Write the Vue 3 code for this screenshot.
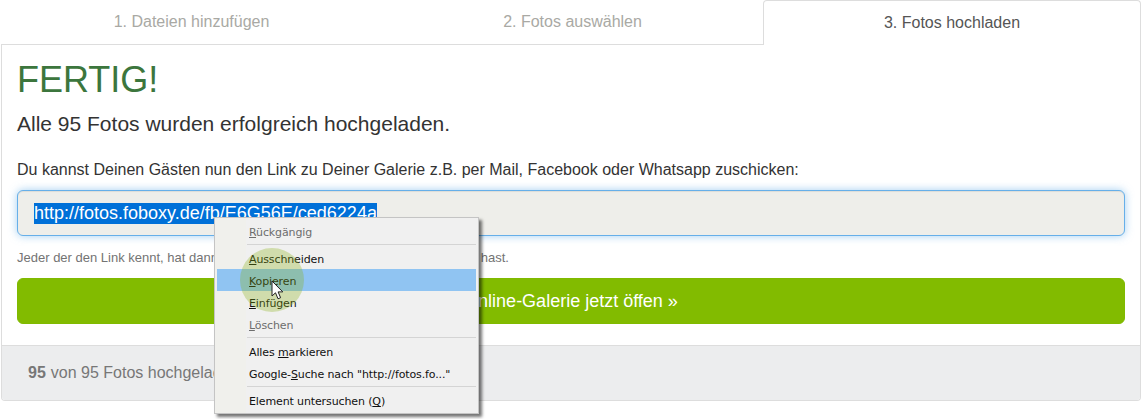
<template>
  <div class="page">
    <div class="tabs">
      <div v-for="tab in tabs" :key="tab.label" class="tab" :class="{ active: tab.active }">{{ tab.label }}</div>
    </div>
    <div class="panel">
      <div class="body">
        <h1>FERTIG!</h1>
        <h2>Alle 95 Fotos wurden erfolgreich hochgeladen.</h2>
        <p class="intro">Du kannst Deinen Gästen nun den Link zu Deiner Galerie z.B. per Mail, Facebook oder Whatsapp zuschicken:</p>
        <div class="link-box"><span class="selected">http://fotos.foboxy.de/fb/E6G56E/ced6224a</span></div>
        <p class="hint">Jeder der den Link kennt, hat dann Zugriff auf Deine Galerie, bis du sie gelöscht hast.</p>
        <button class="open-btn">Online-Galerie jetzt öffen »</button>
      </div>
      <div class="footer"><b>95</b> von 95 Fotos hochgeladen</div>
    </div>

    <div class="menu">
      <template v-for="(item, i) in menu" :key="i">
        <div v-if="item.sep" class="sep"></div>
        <div v-else class="item" :class="{ off: item.off, hover: item.hover }">
          {{ item.a }}<u>{{ item.u }}</u>{{ item.b }}
        </div>
      </template>
    </div>

    <div class="click-ring"></div>
    <svg class="cursor" width="14" height="22" viewBox="0 0 14 22">
      <path d="M1 1 L1 16 L4.5 12.8 L7 18.8 L9.6 17.7 L7.1 11.9 L11.8 11.9 Z" fill="#fff" stroke="#222" stroke-width="1" />
    </svg>
  </div>
</template>

<script setup>
const tabs = [
  { label: '1. Dateien hinzufügen' },
  { label: '2. Fotos auswählen' },
  { label: '3. Fotos hochladen', active: true }
]

const menu = [
  { a: '', u: 'R', b: 'ückgängig', off: true },
  { sep: true },
  { a: '', u: 'A', b: 'usschneiden' },
  { a: '', u: 'K', b: 'opieren', hover: true },
  { a: '', u: 'E', b: 'infügen' },
  { a: '', u: 'L', b: 'öschen', off: true },
  { sep: true },
  { a: 'Alles ', u: 'm', b: 'arkieren' },
  { a: 'Google-', u: 'S', b: 'uche nach "http://fotos.fo..."' },
  { sep: true },
  { a: 'Element untersuchen (', u: 'Q', b: ')' }
]
</script>

<style>
html, body {
  margin: 0;
  background: #fff;
}
</style>

<style scoped>
.page {
  position: relative;
  width: 1141px;
  height: 419px;
  overflow: hidden;
  font-family: "Liberation Sans", Arial, sans-serif;
  color: #333;
}
.tabs {
  display: grid;
  grid-template-columns: 381px 381px 378px;
  height: 45px;
  padding-left: 1px;
  box-sizing: border-box;
}
.tab {
  display: flex;
  align-items: center;
  justify-content: center;
  font-size: 16px;
  color: #a9a9a4;
  border-bottom: 1px solid #ddd;
  box-sizing: border-box;
}
.tab.active {
  color: #555;
  background: #fff;
  border: 1px solid #ddd;
  border-bottom: 0;
  border-radius: 4px 4px 0 0;
}
.panel {
  margin-left: 1px;
  width: 1140px;
  box-sizing: border-box;
  border: 1px solid #ddd;
  border-top: 0;
  border-radius: 0 0 4px 4px;
}
.body {
  padding: 15px 15px 21px;
}
h1 {
  margin: 0;
  font-size: 36px;
  font-weight: 400;
  line-height: 40px;
  color: #3c763d;
}
h2 {
  margin: 12px 0 0;
  font-size: 21px;
  font-weight: 400;
  line-height: 24px;
  color: #333;
}
.intro {
  margin: 23px 0 0;
  font-size: 16px;
  line-height: 22px;
  color: #333;
}
.link-box {
  margin-top: 9px;
  height: 46px;
  box-sizing: border-box;
  display: flex;
  align-items: center;
  padding: 0 16px;
  background: #eeeeea;
  border: 1px solid #66afe9;
  border-radius: 6px;
  box-shadow: inset 0 1px 1px rgba(0, 0, 0, .075), 0 0 8px rgba(102, 175, 233, .6);
  font-size: 18px;
  color: #555;
}
.selected {
  background: #0070d8;
  color: #fff;
  line-height: 21px;
}
.hint {
  margin: 13px 0 0;
  font-size: 13px;
  line-height: 18px;
  color: #737373;
}
.open-btn {
  display: block;
  width: 100%;
  height: 46px;
  margin-top: 11px;
  border: 1px solid #80ba00;
  border-radius: 6px;
  background: #82bb00;
  color: #fff;
  font-family: inherit;
  font-size: 18px;
}
.footer {
  height: 55px;
  box-sizing: border-box;
  display: flex;
  align-items: center;
  gap: 5px;
  padding-left: 26px;
  background: #ecedee;
  border-top: 1px solid #ddd;
  border-radius: 0 0 3px 3px;
  font-size: 16px;
  color: #777;
}
.menu {
  position: absolute;
  left: 214px;
  top: 217px;
  width: 265px;
  height: 197px;
  box-sizing: border-box;
  padding: 2px 2px;
  background: linear-gradient(to right, #f0f0ec 31px, #f0f0f0 31px);
  border: 1px solid #c4c4c4;
  box-shadow: 3px 3px 3px rgba(0, 0, 0, .55);
  font-family: "DejaVu Sans", sans-serif;
  font-size: 11px;
  letter-spacing: -.12px;
  color: #111;
}
.item {
  height: 22px;
  line-height: 26px;
  padding-left: 32px;
  white-space: pre;
}
.item.off {
  color: #6d6d6d;
}
.item.hover {
  background: #90c4f2;
}
.sep {
  height: 1px;
  margin: 2px 0 2px 30px;
  background: #d4d4d4;
}
.click-ring {
  position: absolute;
  left: 240px;
  top: 248px;
  width: 64px;
  height: 64px;
  border-radius: 50%;
  background: rgba(137, 175, 15, .3);
}
.cursor {
  position: absolute;
  left: 271px;
  top: 280px;
}
</style>
